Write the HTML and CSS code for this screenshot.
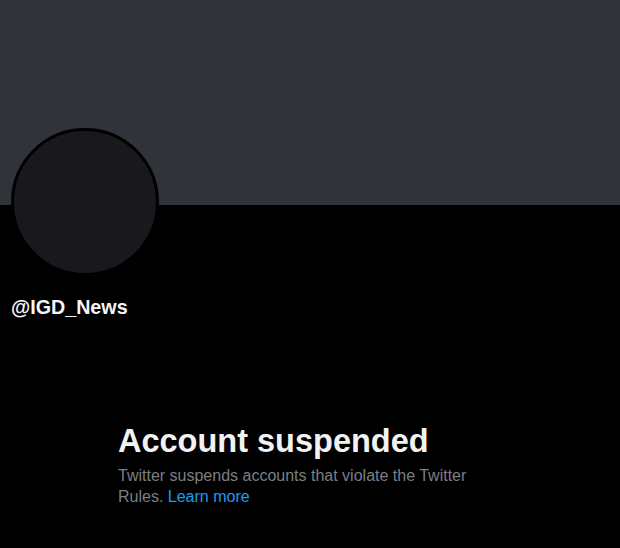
FILE: index.html
```html
<!DOCTYPE html>
<html>
<head>
<meta charset="utf-8">
<link rel="stylesheet" href="styles.css">
</head>
<body>
<div class="page">
  <div class="banner"></div>
  <div class="profile">
    <div class="avatar"></div>
    <div class="handle">@IGD_News</div>
  </div>
  <div class="empty">
    <h1 class="title">Account suspended</h1>
    <p class="desc">Twitter suspends accounts that violate the Twitter Rules. <a class="link" href="#">Learn more</a></p>
  </div>
</div>
</body>
</html>
```
FILE: styles.css
```css
html, body {
  margin: 0;
  padding: 0;
  background: #000;
}
.page {
  width: 620px;
  height: 548px;
  overflow: hidden;
  font-family: "Liberation Sans", Arial, sans-serif;
  color: #e7e9ea;
}
.banner {
  height: 205px;
  background: #303339;
}
.profile {
  padding-left: 11px;
}
.avatar {
  width: 142px;
  height: 142px;
  margin-top: -77px;
  border-radius: 50%;
  border: 3px solid #000;
  background: #18181d;
}
.handle {
  margin-top: 19px;
  font-size: 19.7px;
  font-weight: bold;
  color: #f5f5f5;
  line-height: 24px;
}
.empty {
  margin-left: 118px;
  width: 370px;
  margin-top: 104px;
}
.title {
  margin: 0;
  font-size: 32.5px;
  font-weight: bold;
  line-height: 36px;
  color: #f2f2f2;
}
.desc {
  margin: 6px 0 0;
  font-size: 16px;
  line-height: 21px;
  color: #7b7f84;
}
.link {
  color: #1d9bf0;
  text-decoration: none;
}
```
